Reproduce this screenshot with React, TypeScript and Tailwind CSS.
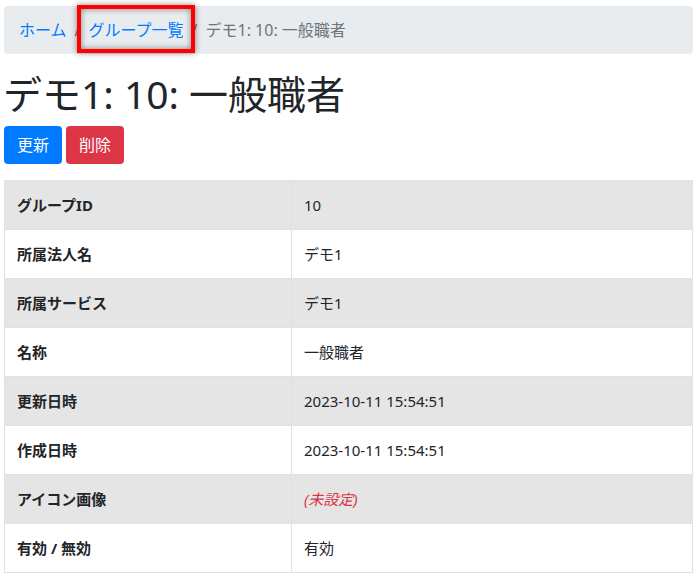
const rows: { label: string; value: string; empty?: boolean }[] = [
  { label: "グループID", value: "10" },
  { label: "所属法人名", value: "デモ1" },
  { label: "所属サービス", value: "デモ1" },
  { label: "名称", value: "一般職者" },
  { label: "更新日時", value: "2023-10-11 15:54:51" },
  { label: "作成日時", value: "2023-10-11 15:54:51" },
  { label: "アイコン画像", value: "(未設定)", empty: true },
  { label: "有効 / 無効", value: "有効" },
];

const App = () => {
  return (
    <div
      className="min-h-screen bg-white px-[4px] pt-[6px] text-[16px] leading-[24px] text-[#212529]"
      style={{ fontFamily: '"Noto Sans", "Noto Sans CJK JP", sans-serif' }}
    >
      {/* breadcrumb */}
      <nav className="flex items-center rounded bg-[#e9ecef] px-[15px] py-[12px]">
        <a className="text-[#007bff]">ホーム</a>
        <span className="px-[8px] text-[#6c757d]">/</span>
        <span className="relative">
          <a className="text-[#007bff]">グループ一覧</a>
          <span className="absolute -top-[13px] -bottom-[11px] -left-[11px] -right-[11px] border-4 border-[#ff0000] shadow-[0_0_6px_rgba(0,0,0,0.45),inset_0_0_6px_rgba(0,0,0,0.45)]" />
        </span>
        <span className="px-[8px] text-[#6c757d]">/</span>
        <span className="text-[#6c757d]">デモ1: 10: 一般職者</span>
      </nav>

      <h1 className="mt-[16px] mb-[8px] -ml-[1px] text-[39px] leading-[48px] font-normal">デモ1: 10: 一般職者</h1>

      <div className="flex gap-[4px]">
        <button className="h-[38px] w-[58px] rounded bg-[#007bff] text-white">更新</button>
        <button className="h-[38px] w-[58px] rounded bg-[#dc3545] text-white">削除</button>
      </div>

      <table className="mt-[16px] w-full border-collapse">
        <tbody>
          {rows.map((r, i) => (
            <tr key={r.label} className={i % 2 === 0 ? "bg-[#e5e5e5]" : "bg-white"}>
              <th className="w-[287px] border border-[#dee2e6] px-[12px] py-[12px] text-left text-[15px] font-bold">
                {r.label}
              </th>
              <td className="border border-[#dee2e6] px-[12px] py-[12px] text-[15px]">
                {r.empty ? <span className="italic text-[#dc3545]">{r.value}</span> : r.value}
              </td>
            </tr>
          ))}
        </tbody>
      </table>
    </div>
  );
};

export default App;
